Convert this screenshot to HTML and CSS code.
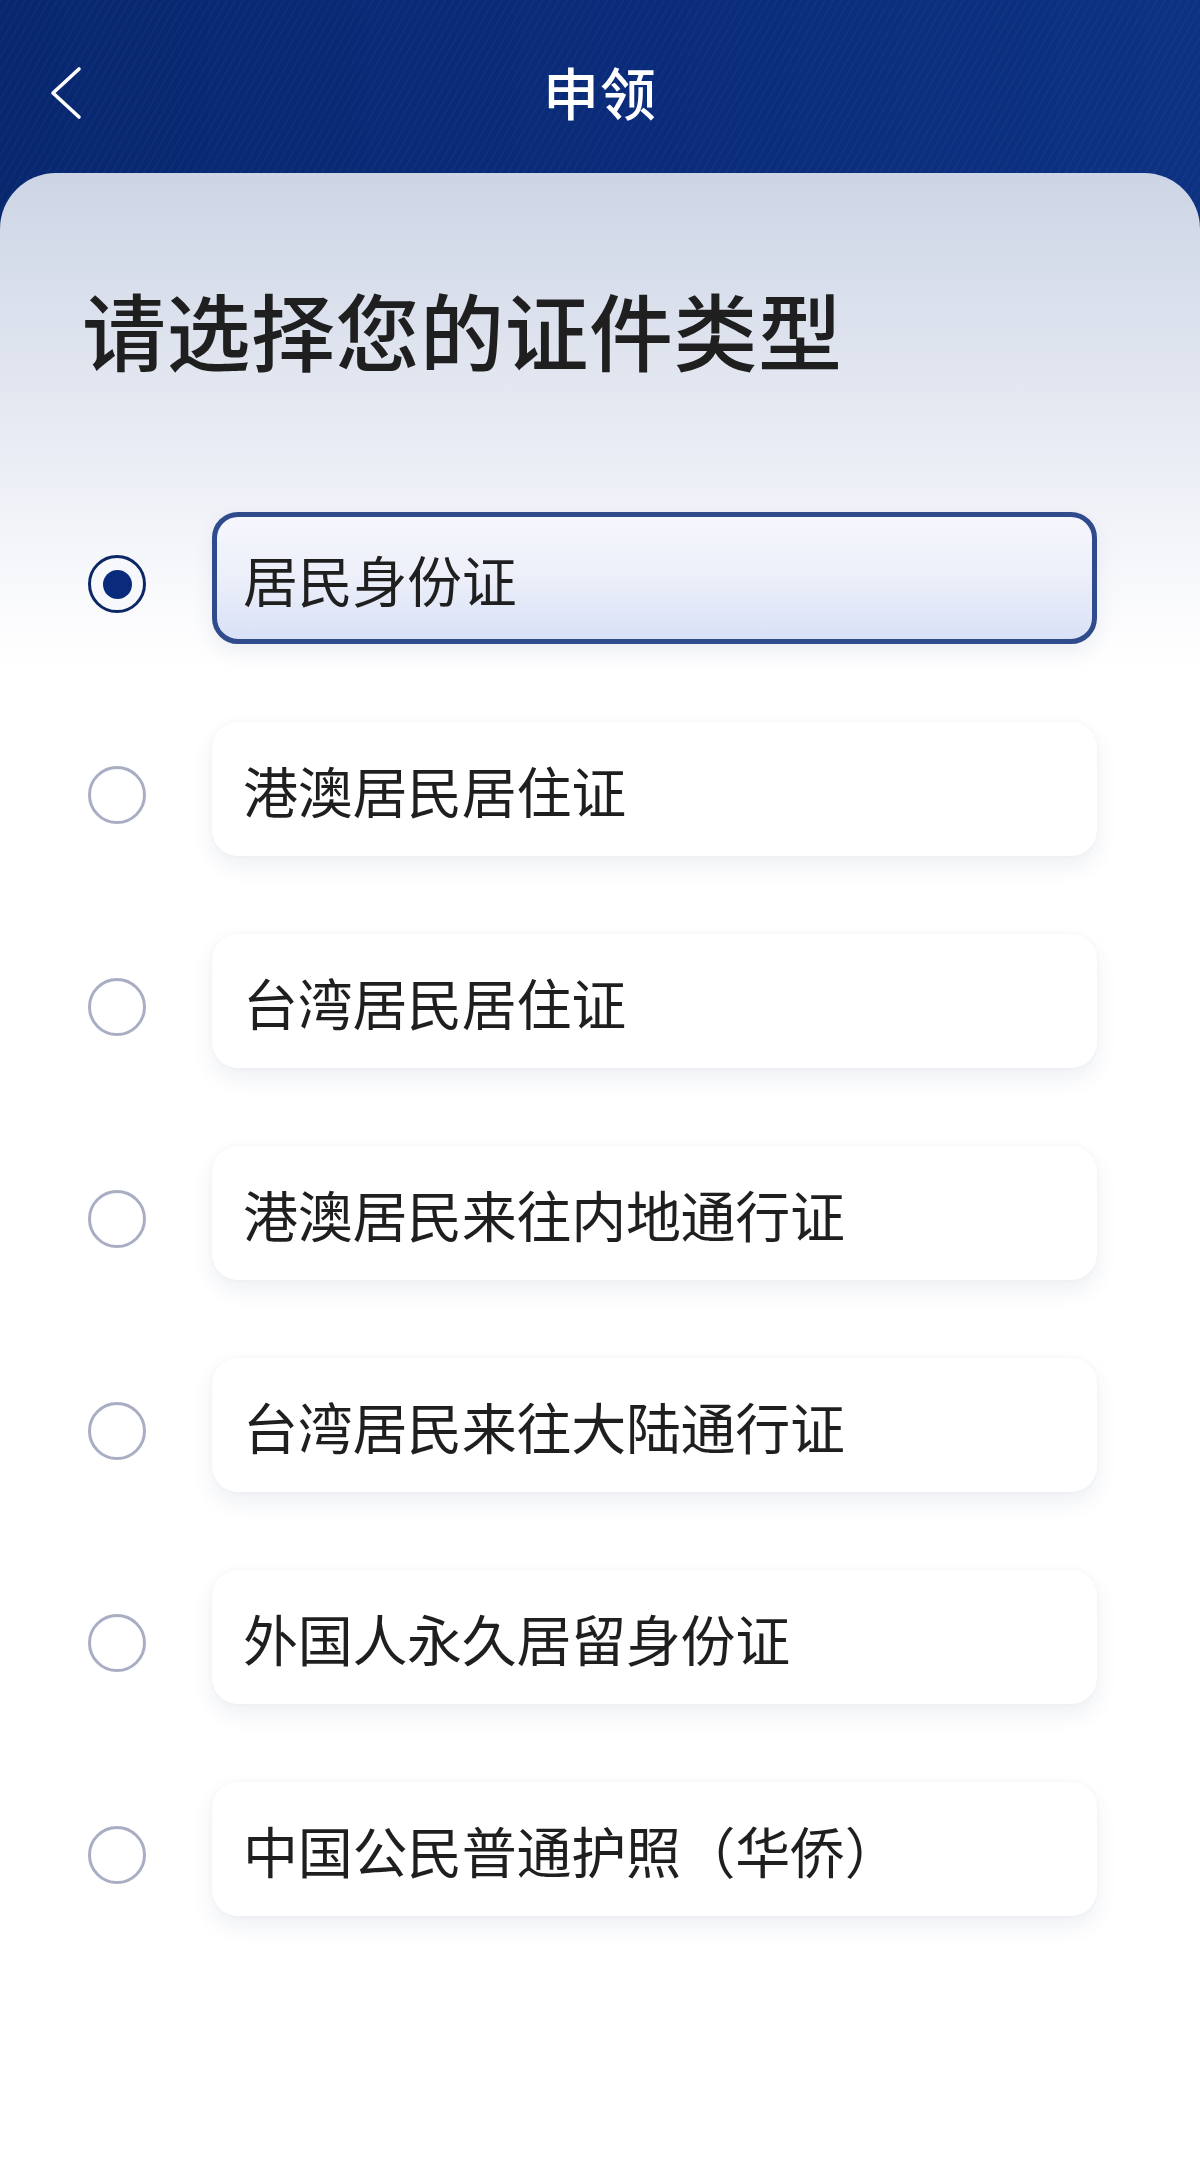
FILE: index.html
```html
<!DOCTYPE html>
<html lang="zh-CN">
<head>
<meta charset="utf-8">
<title>申领</title>
<link rel="stylesheet" href="styles.css">
</head>
<body>
<div class="screen">
  <header class="topbar">
    <button class="back" aria-label="返回">
      <svg width="40" height="60" viewBox="0 0 40 60"><polyline points="30,6 4,30 30,54" fill="none" stroke="#ffffff" stroke-width="3.6" stroke-linecap="round" stroke-linejoin="round"/></svg>
    </button>
    <h1 class="title">申领</h1>
  </header>
  <main class="panel">
    <h2 class="heading">请选择您的证件类型</h2>
    <ul class="options">
      <li class="option selected"><span class="radio"></span><div class="card">居民身份证</div></li>
      <li class="option"><span class="radio"></span><div class="card">港澳居民居住证</div></li>
      <li class="option"><span class="radio"></span><div class="card">台湾居民居住证</div></li>
      <li class="option"><span class="radio"></span><div class="card">港澳居民来往内地通行证</div></li>
      <li class="option"><span class="radio"></span><div class="card">台湾居民来往大陆通行证</div></li>
      <li class="option"><span class="radio"></span><div class="card">外国人永久居留身份证</div></li>
      <li class="option"><span class="radio"></span><div class="card">中国公民普通护照（华侨）</div></li>
    </ul>
  </main>
</div>
</body>
</html>
```
FILE: styles.css
```css
* { box-sizing: border-box; }
html, body { margin: 0; padding: 0; }
body {
  width: 1200px;
  height: 2161px;
  overflow: hidden;
  font-family: "Noto Sans CJK SC", "Noto Sans", sans-serif;
  background: #ffffff;
}
.screen {
  height: 2161px;
  display: flex;
  flex-direction: column;
  background:
    repeating-linear-gradient(120deg, rgba(255,255,255,0.025) 0 2px, rgba(255,255,255,0) 2px 7px),
    linear-gradient(90deg, #07276f 0%, #0a2c7b 60%, #0d3282 100%);
}
.topbar {
  height: 173px;
  flex: 0 0 173px;
  display: flex;
  align-items: flex-start;
  justify-content: center;
  position: relative;
}
.back {
  position: absolute;
  left: 49px;
  top: 63px;
  width: 40px;
  height: 60px;
  padding: 0;
  border: 0;
  background: transparent;
}
.back svg { display: block; }
.title {
  margin: 57px 0 0;
  font-size: 56px;
  line-height: 68px;
  font-weight: 500;
  color: #ffffff;
  letter-spacing: 1px;
}
.panel {
  flex: 1;
  border-radius: 56px 56px 0 0;
  background: linear-gradient(180deg, #cdd5e5 0px, #e5e9f2 240px, #f7f8fb 400px, #ffffff 500px);
  padding: 106px 0 0 0;
}
.heading {
  margin: 0 0 0 82px;
  font-size: 84px;
  line-height: 100px;
  font-weight: 500;
  color: #1f1f1f;
  letter-spacing: 0.5px;
}
.options {
  list-style: none;
  margin: 133px 0 0 0;
  padding: 0 0 0 88px;
  display: flex;
  flex-direction: column;
  gap: 78px;
}
.option {
  display: flex;
  align-items: center;
  gap: 66px;
}
.radio {
  flex: 0 0 58px;
  width: 58px;
  height: 58px;
  margin-top: 12px;
  border-radius: 50%;
  border: 3px solid #a9aec4;
  background: #ffffff;
  display: flex;
  align-items: center;
  justify-content: center;
}
.card {
  width: 885px;
  height: 134px;
  border-radius: 26px;
  background: #ffffff;
  box-shadow: 0 10px 22px rgba(40, 60, 110, 0.08), 0 0 6px rgba(40, 60, 110, 0.03);
  display: flex;
  align-items: center;
  padding-left: 31px;
  font-size: 55px;
  color: #1f1f1f;
  letter-spacing: -0.3px;
}
.selected .radio {
  border: 3px solid #0d2766;
  background: #f7f8fc;
}
.selected .radio::after {
  content: "";
  width: 29px;
  height: 29px;
  border-radius: 50%;
  background: #0a2b7c;
}
.selected .card {
  height: 132px;
  border: 5px solid #2f4b8b;
  background: linear-gradient(180deg, #f6f7fd 0%, #eceff9 50%, #d9e1f7 100%);
  padding-left: 26px;
  box-shadow: 0 8px 20px rgba(40, 60, 110, 0.08);
}
```
